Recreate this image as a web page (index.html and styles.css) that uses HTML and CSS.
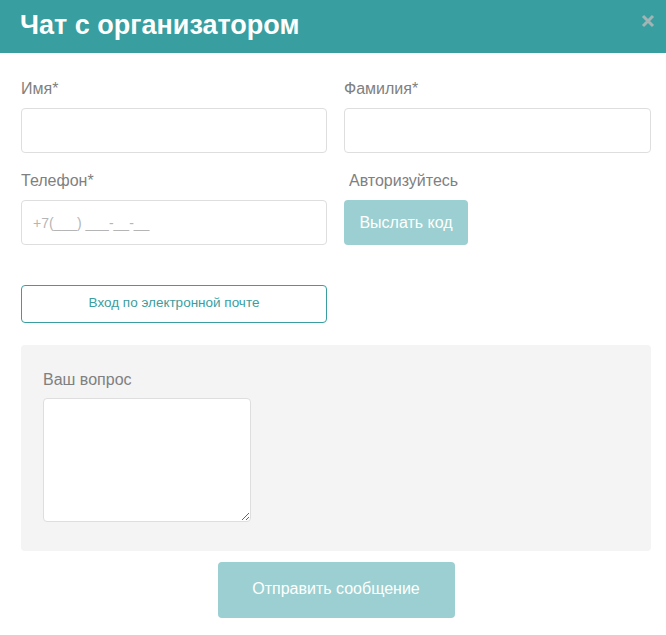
FILE: index.html
```html
<!DOCTYPE html>
<html lang="ru">
<head>
<meta charset="utf-8">
<title>Чат с организатором</title>
<link rel="stylesheet" href="styles.css">
</head>
<body>
<div class="modal">
  <header class="modal-header">
    <h1 class="modal-title">Чат с организатором</h1>
    <button class="close" type="button" aria-label="Закрыть">
      <svg width="14" height="14" viewBox="0 0 14 14"><path d="M2 2L12 12M12 2L2 12" stroke="#a3b4b4" stroke-width="3" stroke-linecap="butt"/></svg>
    </button>
  </header>
  <form class="modal-body">
    <div class="row">
      <div class="field">
        <label class="label">Имя*</label>
        <input class="input" type="text">
      </div>
      <div class="field">
        <label class="label">Фамилия*</label>
        <input class="input" type="text">
      </div>
    </div>
    <div class="row row-2">
      <div class="field">
        <label class="label">Телефон*</label>
        <input class="input" type="text" placeholder="+7(___) ___-__-__">
      </div>
      <div class="field">
        <label class="label label-auth">Авторизуйтесь</label>
        <button class="btn-code" type="button">Выслать код</button>
      </div>
    </div>
    <div class="row row-email">
      <div class="field">
        <button class="btn-email" type="button">Вход по электронной почте</button>
      </div>
    </div>
    <div class="panel">
      <label class="label">Ваш вопрос</label>
      <textarea class="textarea"></textarea>
    </div>
    <div class="actions">
      <button class="btn-send" type="button">Отправить сообщение</button>
    </div>
  </form>
</div>
</body>
</html>
```
FILE: styles.css
```css
* { box-sizing: border-box; }
html, body { margin: 0; padding: 0; background: #fff; }
body { font-family: "Liberation Sans", Arial, sans-serif; color: #808080; }

.modal { width: 666px; }

.modal-header {
  height: 53px;
  background: #389e9f;
  display: flex;
  align-items: center;
  justify-content: space-between;
  padding: 0 11px 0 20px;
}
.modal-title {
  margin: 0;
  color: #fff;
  font-size: 27px;
  font-weight: bold;
  line-height: 1;
  margin-top: -3px;
}
.close {
  border: 0;
  background: none;
  padding: 0;
  width: 14px;
  height: 14px;
  margin-top: -12px;
  display: flex;
}

.modal-body {
  padding: 26px 15px 0 21px;
  display: flex;
  flex-direction: column;
}

.row {
  display: grid;
  grid-template-columns: 306px 307px;
  column-gap: 17px;
}
.row-2 { margin-top: 18px; }
.row-email { margin-top: 40px; }

.field { display: flex; flex-direction: column; align-items: flex-start; }

.label {
  font-size: 16px;
  line-height: 20px;
  color: #808080;
  margin-bottom: 9px;
}
.label-auth { margin-left: 5px; }

.input {
  width: 100%;
  height: 45px;
  border: 1px solid #dedede;
  border-radius: 4px;
  padding: 0 11px;
  font-family: inherit;
  font-size: 14px;
  color: #555;
  background: #fff;
}
.input::placeholder { color: #b5b5b5; }

.btn-code {
  height: 45px;
  width: 124px;
  border: 0;
  border-radius: 4px;
  background: #9bcfd1;
  color: #fff;
  font-family: inherit;
  font-size: 16px;
  padding: 0;
}

.btn-email {
  width: 100%;
  height: 38px;
  border: 1px solid #3a9ea0;
  border-radius: 4px;
  background: #fff;
  color: #3a9ea0;
  font-family: inherit;
  font-size: 13.5px;
  padding: 0 0 3px;
}

.panel {
  margin-top: 22px;
  background: #f4f4f4;
  border-radius: 4px;
  height: 206px;
  padding: 25px 22px 0;
  display: flex;
  flex-direction: column;
  align-items: flex-start;
}
.panel .label { margin-bottom: 8px; }
.textarea {
  width: 208px;
  height: 124px;
  border: 1px solid #dedede;
  border-radius: 4px;
  background: #fff;
  font-family: inherit;
  font-size: 14px;
  padding: 8px;
}

.actions {
  display: flex;
  justify-content: center;
  margin-top: 11px;
}
.btn-send {
  width: 237px;
  height: 56px;
  border: 0;
  border-radius: 4px;
  background: #9bcfd1;
  color: #fff;
  font-family: inherit;
  font-size: 16px;
  padding: 0 0 2px;
}
```
